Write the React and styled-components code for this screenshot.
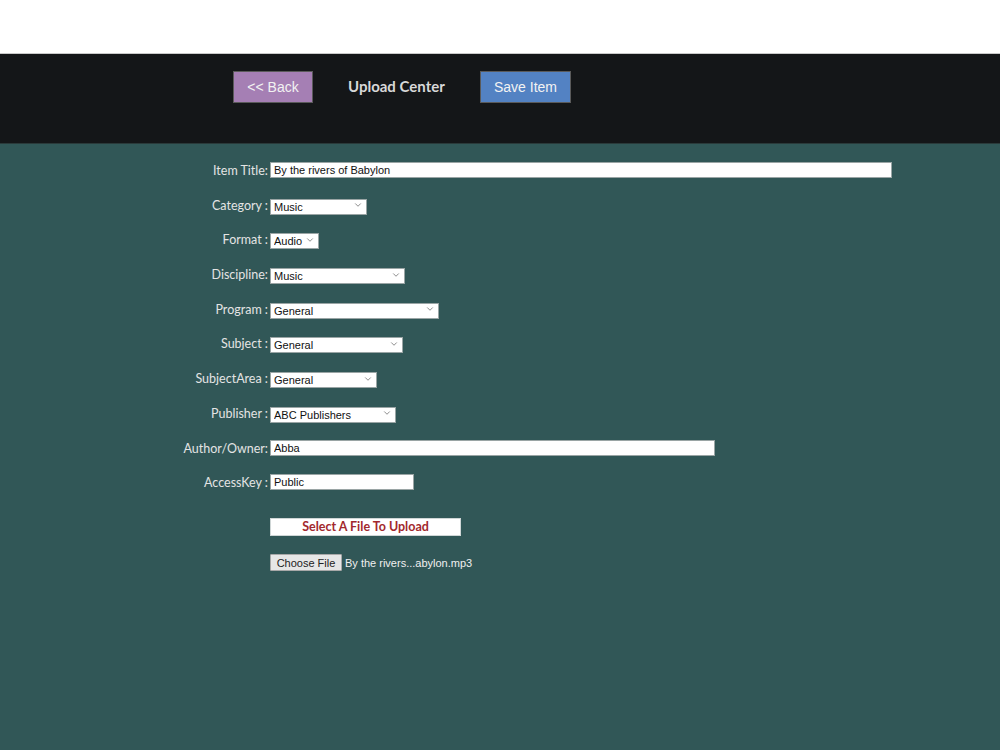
import styled, { createGlobalStyle } from "styled-components";
import { ChevronDown } from "lucide-react";

const GlobalStyle = createGlobalStyle`
  html, body {
    margin: 0;
    padding: 0;
    background: #ffffff;
  }
  #root {
    min-height: 750px;
  }
`;

const Page = styled.div`
  width: 1000px;
  height: 750px;
  display: flex;
  flex-direction: column;
  padding-top: 53px;
  box-sizing: border-box;
  overflow: hidden;
`;

const Header = styled.header`
  height: 91px;
  background: #141618;
  border-top: 1px solid #c9c9c9;
  border-bottom: 1px solid #2a3a3a;
  box-sizing: border-box;
  display: flex;
  align-items: flex-start;
  padding: 17px 0 0 233px;
  column-gap: 35px;
`;

const NavButton = styled.button`
  height: 32px;
  width: ${({ $width }) => $width}px;
  background: ${({ $bg }) => $bg};
  border: 1px solid #5a5a5a;
  color: #f2f2f2;
  font-family: "Liberation Sans", Arial, sans-serif;
  font-size: 14px;
  padding: 0;
  cursor: pointer;
`;

const Title = styled.h1`
  margin: 0;
  width: 97px;
  height: 32px;
  line-height: 31px;
  font-family: Lato, "Open Sans", sans-serif;
  font-weight: 700;
  font-size: 15px;
  color: #d8d8d8;
  white-space: nowrap;
`;

const Main = styled.main`
  flex: 1;
  background: #315757;
  padding-top: 18px;
`;

const Form = styled.form`
  display: flex;
  flex-direction: column;
  row-gap: 18.7px;
`;

const Row = styled.div`
  display: flex;
  align-items: center;
  height: 16px;
`;

const Label = styled.label`
  width: 270px;
  text-align: right;
  padding-right: 2px;
  padding-top: 1px;
  box-sizing: border-box;
  font-family: Lato, "Open Sans", sans-serif;
  font-size: 12.5px;
  color: #e4e4e4;
  white-space: nowrap;
`;

const TextInput = styled.input`
  width: ${({ $width }) => $width}px;
  height: 16px;
  box-sizing: border-box;
  border: 1px solid #9aa5a5;
  background: #ffffff;
  padding: 0 3px;
  font-family: "Liberation Sans", Arial, sans-serif;
  font-size: 11px;
  color: #111;
  outline: none;
`;

const SelectWrap = styled.span`
  position: relative;
  display: inline-block;
  width: ${({ $width }) => $width}px;
  height: 16px;

  svg {
    position: absolute;
    right: 4px;
    top: 3.5px;
    pointer-events: none;
    color: #555;
  }
`;

const Select = styled.select`
  appearance: none;
  width: 100%;
  height: 16px;
  box-sizing: border-box;
  border: 1px solid #9aa5a5;
  border-radius: 0;
  background: #ffffff;
  padding: 0 0 0 3px;
  font-family: "Liberation Sans", Arial, sans-serif;
  font-size: 11px;
  color: #111;
  outline: none;
`;

const UploadArea = styled.div`
  display: flex;
  flex-direction: column;
  align-items: flex-start;
  padding-left: 270px;
  margin-top: 28px;
  row-gap: 18px;
`;

const UploadBanner = styled.div`
  width: 191px;
  height: 18px;
  background: #ffffff;
  border: 1px solid #cfd6d6;
  box-sizing: border-box;
  text-align: center;
  font-family: Lato, "Open Sans", sans-serif;
  font-weight: 700;
  font-size: 12.5px;
  line-height: 16px;
  color: #a2282d;
`;

const FileRow = styled.div`
  display: flex;
  align-items: center;
  column-gap: 3px;
  font-family: "Liberation Sans", Arial, sans-serif;
  font-size: 11px;
  color: #f0f0f0;
`;

const ChooseButton = styled.button`
  height: 17px;
  width: 72px;
  padding: 0;
  background: #e6e6e6;
  border: 1px solid #a8a8a8;
  border-radius: 1px;
  font-family: "Liberation Sans", Arial, sans-serif;
  font-size: 11px;
  color: #222;
`;

const fields = [
  { label: "Item Title:", type: "text", value: "By the rivers of Babylon", width: 622 },
  { label: "Category :", type: "select", value: "Music", width: 97 },
  { label: "Format :", type: "select", value: "Audio", width: 49 },
  { label: "Discipline:", type: "select", value: "Music", width: 135 },
  { label: "Program :", type: "select", value: "General", width: 169 },
  { label: "Subject :", type: "select", value: "General", width: 133 },
  { label: "SubjectArea :", type: "select", value: "General", width: 107 },
  { label: "Publisher :", type: "select", value: "ABC Publishers", width: 126 },
  { label: "Author/Owner:", type: "text", value: "Abba", width: 445 },
  { label: "AccessKey :", type: "text", value: "Public", width: 144 },
];

export default function App() {
  return (
    <Page>
      <GlobalStyle />
      <Header>
        <NavButton type="button" $bg="#a57fb4" $width={80}>
          &lt;&lt; Back
        </NavButton>
        <Title>Upload Center</Title>
        <NavButton type="button" $bg="#5382c3" $width={91}>
          Save Item
        </NavButton>
      </Header>
      <Main>
        <Form onSubmit={(e) => e.preventDefault()}>
          {fields.map((f) => (
            <Row key={f.label}>
              <Label>{f.label}</Label>
              {f.type === "text" ? (
                <TextInput $width={f.width} defaultValue={f.value} />
              ) : (
                <SelectWrap $width={f.width}>
                  <Select defaultValue={f.value}>
                    <option>{f.value}</option>
                  </Select>
                  <ChevronDown size={10} strokeWidth={1.6} />
                </SelectWrap>
              )}
            </Row>
          ))}
        </Form>
        <UploadArea>
          <UploadBanner>Select A File To Upload</UploadBanner>
          <FileRow>
            <ChooseButton type="button">Choose File</ChooseButton>
            <span>By the rivers...abylon.mp3</span>
          </FileRow>
        </UploadArea>
      </Main>
    </Page>
  );
}
